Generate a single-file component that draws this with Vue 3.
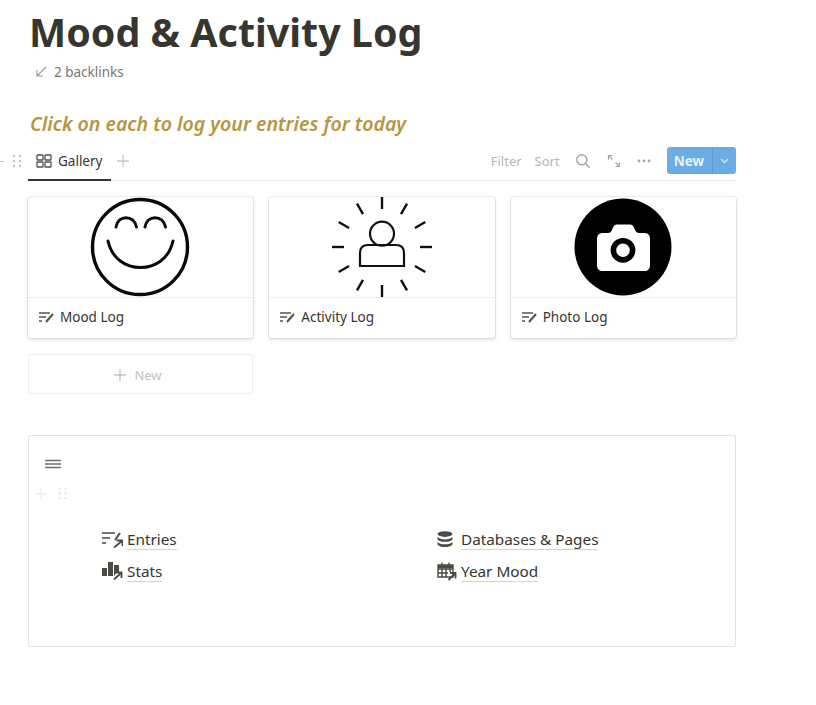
<script setup>
const cards = [
  { id: 'mood', name: 'Mood Log' },
  { id: 'activity', name: 'Activity Log' },
  { id: 'photo', name: 'Photo Log' },
]

// the twelve rays round the activity figure
const rays = [0, 30, 60, 90, 120, 150, 180, 210, 240, 270, 300, 330]
</script>

<template>
  <main class="page">
    <h1 class="title">Mood &amp; Activity Log</h1>

    <div class="backlinks">
      <svg class="backlink-icon" width="12" height="12" viewBox="0 0 12 12">
        <path d="M11 1 2 10M2 4v6h6" fill="none" stroke="#9b9a97" stroke-width="1.1" />
      </svg>
      <span>2 backlinks</span>
    </div>

    <h2 class="callout">Click on each to log your entries for today</h2>

    <section class="database">
      <div class="handles">
        <span class="stub"></span>
        <svg width="10" height="14" viewBox="0 0 10 14" fill="#c4c3c0">
          <circle cx="2" cy="2" r="1.2" /><circle cx="8" cy="2" r="1.2" />
          <circle cx="2" cy="7" r="1.2" /><circle cx="8" cy="7" r="1.2" />
          <circle cx="2" cy="12" r="1.2" /><circle cx="8" cy="12" r="1.2" />
        </svg>
      </div>

      <header class="toolbar">
        <div class="tabs">
          <div class="tab">
            <svg width="16" height="14" viewBox="0 0 16 14" fill="none" stroke="#55534e" stroke-width="1.3">
              <rect x="1" y="1" width="6" height="5" rx="0.6" />
              <rect x="9" y="1" width="6" height="5" rx="0.6" />
              <rect x="1" y="8" width="6" height="5" rx="0.6" />
              <rect x="9" y="8" width="6" height="5" rx="0.6" />
            </svg>
            <span>Gallery</span>
          </div>
          <svg class="tab-add" width="14" height="14" viewBox="0 0 14 14">
            <path d="M7 1v12M1 7h12" stroke="#c9c8c5" stroke-width="1.3" />
          </svg>
        </div>

        <div class="actions">
          <span class="action">Filter</span>
          <span class="action sort">Sort</span>
          <svg class="search" width="16" height="16" viewBox="0 0 16 16" fill="none" stroke="#a5a4a1" stroke-width="1.4">
            <circle cx="6.8" cy="6.8" r="5" />
            <path d="m10.5 10.5 4.2 4.2" />
          </svg>
          <svg width="14" height="14" viewBox="0 0 14 14" fill="none" stroke="#a5a4a1" stroke-width="1.2">
            <path d="M1.5 1.500 5.500 5.500M8.500 8.500l4 4M1.500 5.500v-4h4M12.500 8.500v4h-4" />
          </svg>
          <svg width="14" height="4" viewBox="0 0 14 4" fill="#a5a4a1">
            <circle cx="2" cy="2" r="1.400" /><circle cx="7" cy="2" r="1.400" /><circle cx="12" cy="2" r="1.400" />
          </svg>
          <div class="new-button">
            <span class="new-label">New</span>
            <span class="new-caret">
              <svg width="9" height="6" viewBox="0 0 9 6" fill="none" stroke="#d6e6f7" stroke-width="1.300">
                <path d="m1 1 3.500 3.500L8 1" />
              </svg>
            </span>
          </div>
        </div>
      </header>

      <div class="gallery">
        <article v-for="card in cards" :key="card.id" class="card">
          <div class="cover">
            <svg v-if="card.id === 'mood'" class="smile" width="100" height="100" viewBox="0 0 100 100" fill="none" stroke="#0a0a0a" stroke-linecap="round">
              <circle cx="50" cy="50" r="47.500" stroke-width="3.400" />
              <path d="M18 44C22 62 36 70.600 50.500 70.600S79 62 83 44" stroke-width="3" />
              <path d="M26 30C28 17.500 44 17.500 46.500 30M55 30C57 17.500 73 17.500 75.500 30" stroke-width="3" />
            </svg>

            <svg v-else-if="card.id === 'activity'" width="104" height="102" viewBox="0 0 104 102" fill="none" stroke="#111">
              <g stroke-width="2.400">
                <line
                  v-for="angle in rays"
                  :key="angle"
                  x1="52" y1="1" x2="52" y2="13"
                  :transform="`rotate(${angle} 52 51)`"
                />
              </g>
              <g stroke-width="2.200">
                <circle cx="52" cy="37.700" r="12" />
                <path d="M30 70V57c0-5 3-8 8-8h28c5 0 8 3 8 8v13z" />
              </g>
            </svg>

            <svg v-else width="98" height="98" viewBox="0 0 98 98">
              <circle cx="49" cy="49" r="48.500" fill="#000" />
              <path fill="#fff" d="M29 35h5c2 0 3-1 4-3l1-2.500c1-2 2-3 4-3h13c2 0 3 1 4 3l1 2.500c1 2 2 3 4 3h5c4 0 6 2 6 6v26c0 4-2 6-6 6H29c-4 0-6-2-6-6V41c0-4 2-6 6-6z" />
              <circle cx="49" cy="52.300" r="9.600" fill="none" stroke="#000" stroke-width="5.600" />
            </svg>
          </div>
          <div class="card-name">
            <svg width="17" height="12" viewBox="0 0 17 12" fill="none" stroke="#55534e" stroke-width="1.300">
              <path d="M1 2h11M1 6h7M1 10h3" />
              <path d="m8 11 7-8" stroke-width="2" />
            </svg>
            <span>{{ card.name }}</span>
          </div>
        </article>
      </div>

      <div class="add-row">
        <svg width="14" height="14" viewBox="0 0 14 14">
          <path d="M7 1v12M1 7h12" stroke="#c4c3c0" stroke-width="1.300" />
        </svg>
        <span>New</span>
      </div>
    </section>

    <section class="nav-box">
      <svg class="hamburger" width="16" height="10" viewBox="0 0 16 10">
        <path d="M0 1.500h16M0 5h16M0 8.500h16" stroke="#6f6e6a" stroke-width="1.300" />
      </svg>

      <div class="row-handles">
        <svg width="12" height="12" viewBox="0 0 12 12">
          <path d="M6 0v12M0 6h12" stroke="#eeeeec" stroke-width="1.300" />
        </svg>
        <svg width="9" height="13" viewBox="0 0 9 13" fill="#e6e6e3">
          <circle cx="1.500" cy="2" r="1.200" /><circle cx="7.500" cy="2" r="1.200" />
          <circle cx="1.500" cy="6.500" r="1.200" /><circle cx="7.500" cy="6.500" r="1.200" />
          <circle cx="1.500" cy="11" r="1.200" /><circle cx="7.500" cy="11" r="1.200" />
        </svg>
      </div>

      <div class="links">
        <a class="link">
          <svg width="21" height="18" viewBox="0 0 21 18" fill="none" stroke="#4c4a45">
            <path d="M0 3h13M0 8h8M0 13h4" stroke-width="1.400" />
            <path d="m13 10 5-7" stroke-width="2" />
            <path d="m12 17.500 8-6.500M14.500 10.500H20.500V16" stroke-width="1.800" />
          </svg>
          <span class="link-text">Entries</span>
        </a>
        <a class="link link-db">
          <svg width="16" height="16" viewBox="0 0 16 18" preserveAspectRatio="none" fill="#4c4a45">
            <ellipse cx="8" cy="3.500" rx="7.500" ry="3.200" />
            <path d="M.5 6.500c1.500 2 4 3 7.500 3s6-1 7.500-3v2.500c-.5 2-3.500 3.200-7.500 3.200S1 11 .5 9z" />
            <path d="M.5 12c1.500 2 4 3 7.500 3s6-1 7.500-3v2.500C15 16.500 12 18 8 18s-7-1.500-7.500-3.500z" />
          </svg>
          <span class="link-text">Databases &amp; Pages</span>
        </a>
        <a class="link">
          <svg width="21" height="18" viewBox="0 0 21 18" fill="none" stroke="#4c4a45">
            <path fill="#4c4a45" stroke="none" d="M0 6h5v8H0zM6 0h5v14H6zM12 3h5v7h-2l-3 4z" />
            <path d="m12 17.500 7-6.500M14 10.500h5.500V16" stroke-width="1.800" />
          </svg>
          <span class="link-text">Stats</span>
        </a>
        <a class="link link-year">
          <svg width="20" height="19" viewBox="0 0 20 19" fill="none" stroke="#4c4a45" stroke-width="1.400">
            <path d="M1 3h15v12H1zM1 7h15M1 11h10M5 3v12M9 3v12M13 3v7M5 .5v3M12 .5v3" />
            <path fill="#4c4a45" stroke="none" d="M1 3h15v3H1z" />
            <path d="m11.500 18 6.500-6.500M13 11h5.500v5.500" stroke-width="1.800" />
          </svg>
          <span class="link-text">Year Mood</span>
        </a>
      </div>
    </section>
  </main>
</template>

<style>
html,
body {
  background: #fff;
}
</style>

<style scoped>
.page {
  position: relative;
  width: 708px;
  height: 705px;
  overflow: hidden;
  padding-left: 28px;
  padding-right: 80px;
  font-family: 'Noto Sans', 'Open Sans', sans-serif;
  color: #37352f;
}

.title {
  margin: 8px 0 0 1px;
  font-size: 39.400px;
  line-height: 48px;
  font-weight: 700;
  color: #37352f;
}

.backlinks {
  display: flex;
  align-items: center;
  gap: 7px;
  margin: 6px 0 0 7px;
  height: 20px;
  font-size: 13.500px;
  color: #787774;
}

.callout {
  margin: 28px 0 0 2px;
  font-size: 19.500px;
  line-height: 28px;
  font-weight: 600;
  font-style: italic;
  color: #b8953f;
}

.database {
  position: relative;
  margin-top: 8px;
}

.handles {
  position: absolute;
  left: -28px;
  top: 8px;
  display: flex;
  align-items: center;
  gap: 8px;
}

.stub {
  width: 4px;
  height: 1px;
  background: #c4c3c0;
}

.toolbar {
  display: flex;
  justify-content: space-between;
  align-items: center;
  height: 34px;
  border-bottom: 1px solid #e9e9e7;
}

.tabs {
  display: flex;
  align-items: center;
  height: 100%;
  gap: 5px;
}

.tab {
  display: flex;
  align-items: center;
  gap: 6px;
  box-sizing: border-box;
  width: 83px;
  height: 35px;
  margin-bottom: -1px;
  padding: 0 0 3px 8px;
  border-bottom: 2px solid #37352f;
  font-size: 13.500px;
}

.tab-add {
  margin-top: -5px;
}

.actions {
  display: flex;
  align-items: center;
  gap: 16px;
  margin-top: -5px;
}

.action {
  font-size: 13px;
  color: #b5b4b1;
}

.sort {
  margin-left: -3px;
}

.search {
  margin-left: -1px;
}

.new-button {
  display: flex;
  align-items: stretch;
  height: 27px;
  border-radius: 3px;
  overflow: hidden;
  background: #6cace4;
  color: #e9f3fb;
  font-size: 13.500px;
  font-weight: 700;
}

.new-label {
  display: flex;
  align-items: center;
  padding: 0 8px 0 7px;
}

.new-caret {
  display: flex;
  align-items: center;
  padding: 0 7px;
  border-left: 1px solid #5c9bd2;
}

.gallery {
  display: grid;
  grid-template-columns: repeat(3, 1fr);
  gap: 16px;
  margin-top: 16px;
}

.card {
  box-sizing: border-box;
  height: 141px;
  border-radius: 3px;
  background: #fff;
  box-shadow: 0 0 0 1px rgba(15, 15, 15, 0.07), 0 2px 4px rgba(15, 15, 15, 0.12);
}

.cover {
  display: flex;
  justify-content: center;
  align-items: center;
  height: 100px;
  overflow: hidden;
  border-bottom: 1px solid #eeeeec;
}

.smile {
  margin-right: 1px;
}

.card-name {
  display: flex;
  align-items: center;
  gap: 5px;
  height: 38px;
  padding: 0 0 2px 10px;
  font-size: 13.500px;
}

.add-row {
  display: flex;
  justify-content: center;
  align-items: center;
  gap: 7px;
  box-sizing: border-box;
  width: 225px;
  height: 40px;
  margin-top: 16px;
  padding: 1px 6px 0 0;
  border: 1px solid #eeeeec;
  border-radius: 2px;
  font-size: 13px;
  color: #c4c3c0;
}

.nav-box {
  position: relative;
  box-sizing: border-box;
  width: 708px;
  height: 212px;
  margin-top: 41px;
  border: 1px solid #e3e3e1;
  border-radius: 2px;
}

.hamburger {
  position: absolute;
  left: 16px;
  top: 23px;
}

.row-handles {
  position: absolute;
  left: 6px;
  top: 51px;
  display: flex;
  align-items: center;
  gap: 11px;
}

.links {
  display: grid;
  grid-template-columns: 335px 1fr;
  grid-auto-rows: 32px;
  padding: 87px 0 0 73px;
}

.link {
  display: flex;
  align-items: center;
  gap: 4px;
  font-size: 15.300px;
  font-weight: 400;
  color: #37352f;
}

.link-db {
  gap: 8px;
}

.link-text {
  line-height: 20px;
  border-bottom: 1px solid #d3d2cf;
}
</style>
